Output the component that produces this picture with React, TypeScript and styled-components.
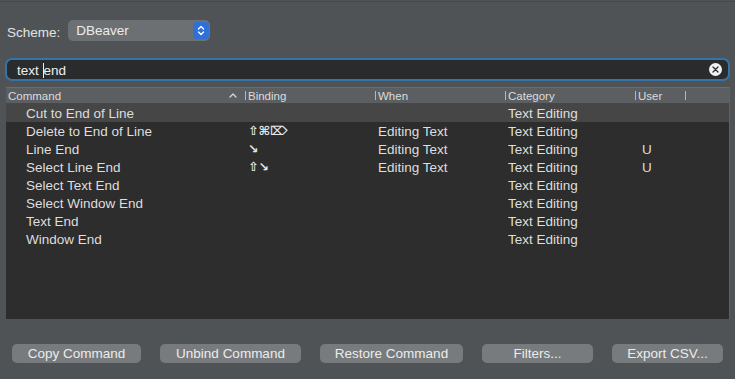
import React from "react";
import styled, { createGlobalStyle } from "styled-components";

const Global = createGlobalStyle`
  html, body { margin: 0; padding: 0; background: #4f5356; }
  body { font-family: "Liberation Sans", Arial, sans-serif; -webkit-font-smoothing: antialiased; }
  #root { width: 735px; height: 379px; }
`;

const Window = styled.div`
  width: 735px;
  height: 379px;
  box-sizing: border-box;
  background: #4f5356;
  border-top: 1px solid #45484b;
  margin-top: 1px;
  display: flex;
  flex-direction: column;
  color: #e2e2e2;
  overflow: hidden;
`;

const SchemeRow = styled.div`
  display: flex;
  align-items: center;
  gap: 8px;
  padding: 18px 0 0 7px;
  height: 21px;
`;

const Label = styled.span`
  font-size: 13.5px;
  color: #e4e4e4;
  margin-top: 3px;
`;

const Popup = styled.div`
  width: 142px;
  height: 21px;
  box-sizing: border-box;
  border-radius: 5px;
  background: #6c7072;
  display: flex;
  align-items: center;
  justify-content: space-between;
  padding: 0 1px 0 8px;
  font-size: 13.5px;
  color: #ececec;
`;

const Stepper = styled.div`
  width: 16px;
  height: 17px;
  border-radius: 4px;
  background: #2f70d8;
  display: flex;
  align-items: center;
  justify-content: center;
`;

const SearchWrap = styled.div`
  margin: 17px 5px 0 5px;
  height: 23px;
  box-sizing: border-box;
  border-radius: 7px;
  background: #2a2b2c;
  border: 2px solid #3873a6;
  display: flex;
  align-items: center;
  padding: 0 6px 0 10px;
`;

const SearchText = styled.div`
  flex: 1;
  font-size: 13.5px;
  color: #efefef;
  display: flex;
  align-items: center;
  padding-top: 1px;
`;

const Caret = styled.span`
  display: inline-block;
  width: 1px;
  height: 15px;
  background: #efefef;
`;

const ClearBtn = styled.div`
  width: 13px;
  height: 13px;
  border-radius: 50%;
  background: #f2f2f2;
  display: flex;
  align-items: center;
  justify-content: center;
`;

const Table = styled.div`
  margin: 6px 5px 0 6px;
  height: 232px;
  display: flex;
  flex-direction: column;
  background: #2d2d2d;
  border-right: 1px solid #5e6265;
`;

const cols = "239px 130px 130px 130px 50px 1fr";

const HeaderRow = styled.div`
  display: grid;
  grid-template-columns: ${cols};
  background: #5b5f62;
  border-top: 1px solid #6a6e71;
  border-bottom: 1px solid #45484a;
  box-sizing: border-box;
  height: 17px;
`;

const HeadCell = styled.div<{ $first?: boolean }>`
  position: relative;
  display: flex;
  align-items: center;
  font-size: 11.5px;
  color: #dcdcdc;
  padding-left: ${(p) => (p.$first ? "2px" : "3px")};
  &::before {
    content: "";
    display: ${(p) => (p.$first ? "none" : "block")};
    position: absolute;
    left: 0;
    top: 3px;
    bottom: 3px;
    width: 1px;
    background: #b8b8b8;
  }
`;

const SortMark = styled.span`
  margin-left: auto;
  margin-right: 8px;
  display: flex;
  align-items: center;
`;

const Row = styled.div<{ $selected?: boolean }>`
  display: grid;
  grid-template-columns: ${cols};
  height: 18px;
  background: ${(p) => (p.$selected ? "#464646" : "transparent")};
  align-items: center;
  font-size: 13.5px;
  color: #dedede;
`;

const Cell = styled.div<{ $pad?: number }>`
  padding-left: ${(p) => p.$pad ?? 3}px;
  white-space: nowrap;
  padding-top: 1px;
`;

const KeyCell = styled(Cell)`
  font-family: "DejaVu Sans", sans-serif;
  font-size: 12.5px;
  font-weight: bold;
  line-height: 1;
  color: #e6e6e6;
`;

const ButtonBar = styled.div`
  display: flex;
  gap: 19px;
  padding: 25px 0 0 12px;
`;

const Button = styled.div<{ $w: number }>`
  width: ${(p) => p.$w}px;
  height: 19px;
  border-radius: 5px;
  background: #777b7d;
  display: flex;
  align-items: center;
  justify-content: center;
  font-size: 13.5px;
  color: #ececec;
`;

const rows: [string, string, string, string, string][] = [
  ["Cut to End of Line", "", "", "Text Editing", ""],
  ["Delete to End of Line", "⇧⌘⌦", "Editing Text", "Text Editing", ""],
  ["Line End", "↘", "Editing Text", "Text Editing", "U"],
  ["Select Line End", "⇧↘", "Editing Text", "Text Editing", "U"],
  ["Select Text End", "", "", "Text Editing", ""],
  ["Select Window End", "", "", "Text Editing", ""],
  ["Text End", "", "", "Text Editing", ""],
  ["Window End", "", "", "Text Editing", ""],
];

const buttons: [string, number][] = [
  ["Copy Command", 129],
  ["Unbind Command", 141],
  ["Restore Command", 143],
  ["Filters...", 111],
  ["Export CSV...", 111],
];

export default function App() {
  return (
    <>
      <Global />
      <Window>
        <SchemeRow>
          <Label>Scheme:</Label>
          <Popup>
            <span>DBeaver</span>
            <Stepper>
              <svg width="10" height="13" viewBox="0 0 10 13">
                <path d="M2.5 5 L5 2.5 L7.5 5 M2.5 8 L5 10.5 L7.5 8" fill="none" stroke="#fff" strokeWidth="1.4" strokeLinecap="round" strokeLinejoin="round" />
              </svg>
            </Stepper>
          </Popup>
        </SchemeRow>
        <SearchWrap>
          <SearchText>
            text&nbsp;<Caret />end
          </SearchText>
          <ClearBtn>
            <svg width="7" height="7" viewBox="0 0 7 7">
              <path d="M1 1 L6 6 M6 1 L1 6" stroke="#2a2a2a" strokeWidth="1.3" strokeLinecap="round" />
            </svg>
          </ClearBtn>
        </SearchWrap>
        <Table>
          <HeaderRow>
            <HeadCell $first>
              Command
              <SortMark>
                <svg width="8" height="5" viewBox="0 0 8 5">
                  <path d="M1 4 L4 1 L7 4" fill="none" stroke="#d8d8d8" strokeWidth="1.3" strokeLinecap="round" strokeLinejoin="round" />
                </svg>
              </SortMark>
            </HeadCell>
            <HeadCell>Binding</HeadCell>
            <HeadCell>When</HeadCell>
            <HeadCell>Category</HeadCell>
            <HeadCell>User</HeadCell>
            <HeadCell />
          </HeaderRow>
          {rows.map((r, i) => (
            <Row key={i} $selected={i === 0}>
              <Cell $pad={20}>{r[0]}</Cell>
              <KeyCell>{r[1]}</KeyCell>
              <Cell>{r[2]}</Cell>
              <Cell>{r[3]}</Cell>
              <Cell $pad={7}>{r[4]}</Cell>
              <Cell />
            </Row>
          ))}
        </Table>
        <ButtonBar>
          {buttons.map(([t, w]) => (
            <Button key={t} $w={w}>
              {t}
            </Button>
          ))}
        </ButtonBar>
      </Window>
    </>
  );
}
